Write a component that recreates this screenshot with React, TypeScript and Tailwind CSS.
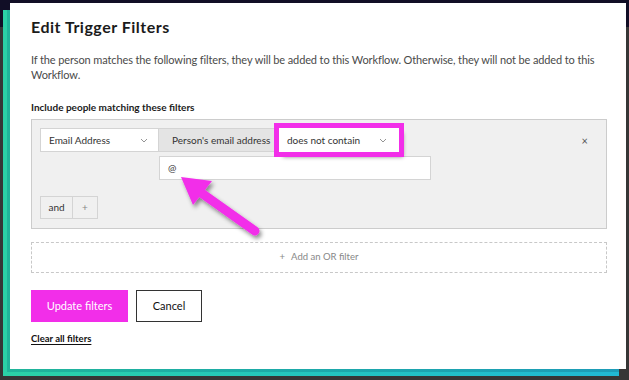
import React from "react";

export default function App() {
  const font = { fontFamily: "Lato, 'Noto Sans', Arial, sans-serif" };
  return (
    <div className="relative w-[629px] h-[380px] overflow-hidden bg-[#363636]" style={font}>
      <div className="absolute left-0 top-0 w-[629px] h-[27px] bg-[#110e26]" />
      {/* teal backdrop card */}
      <div className="absolute left-[3px] top-[10px] w-[616px] h-[366px] bg-gradient-to-r from-[#2bd1a6] to-[#21b8d4]" />
      <div className="absolute left-[7px] top-[10px] w-[612px] h-[362px] bg-gradient-to-r from-[#20b59a] to-[#1d9cb8]" />
      {/* modal */}
      <div className="absolute left-[10px] top-[3px] w-[616px] h-[366px] bg-white pl-[21px] pr-[17px]">
        <h1 className="mt-[14px] text-[16px] leading-[20px] font-bold text-[#1b1b1b] tracking-[0.5px]">Edit Trigger Filters</h1>
        <p className="mt-[15px] text-[11px] leading-[15px] text-[#4a4a4a] tracking-[-0.12px]">
          If the person matches the following filters, they will be added to this Workflow. Otherwise, they will not be added to this Workflow.
        </p>
        <div className="mt-[19px] text-[10px] leading-[12px] font-bold text-[#1b1b1b]">Include people matching these filters</div>
        <div className="mt-[6px] mr-[2px] h-[110px] border border-[#cccccc] bg-[#f0f0f0] pl-[8px] pt-[8px] relative">
          <div className="flex items-center h-[24px]">
            <div className="w-[119px] h-[24px] bg-white border border-[#d4d4d4] flex items-center justify-between pl-[8px] pr-[10px] text-[10px] text-[#333]">
              <span>Email Address</span>
              <svg width="8" height="5" viewBox="0 0 8 5"><path d="M1 1l3 3 3-3" fill="none" stroke="#888" strokeWidth="0.9" /></svg>
            </div>
            <div className="w-[120px] h-[24px] bg-[#e4e4e4] border-y border-[#d4d4d4] flex items-center pl-[13px] text-[10px] text-[#333]">
              Person's email address
            </div>
            <div className="w-[120px] h-[24px] bg-white flex items-center justify-between pl-[8px] pr-[12px] text-[10px] text-[#333] outline-[5px] outline-solid outline-[#f22ee9] shadow-[4px_5px_4px_rgba(0,0,0,0.45)] relative">
              <span>does not contain</span>
              <svg width="8" height="5" viewBox="0 0 8 5"><path d="M1 1l3 3 3-3" fill="none" stroke="#888" strokeWidth="0.9" /></svg>
            </div>
            <div className="ml-auto mr-[18px] text-[11px] text-[#555] leading-none">×</div>
          </div>
          <div className="mt-[4px] ml-[119px] w-[272px] h-[24px] bg-white border border-[#d4d4d4] flex items-center pl-[8px] text-[10px] text-[#333]">@</div>
          <div className="mt-[16px] flex w-[58px] h-[23px] border border-[#d4d4d4] bg-[#f0f0f0] text-[10px] text-[#333]">
            <div className="w-[32px] border-r border-[#d4d4d4] flex items-center justify-center">and</div>
            <div className="flex-1 flex items-center justify-center text-[#888]">+</div>
          </div>
        </div>
        <div className="mt-[13px] mr-[2px] h-[31px] border border-dashed border-[#c8c8c8] flex items-center justify-center text-[9.5px] text-[#888]">
          <span className="mr-[6px]">+</span>Add an OR filter
        </div>
        <div className="mt-[17px] flex gap-[8px]">
          <button className="w-[97px] h-[32px] bg-[#f22ee9] text-white text-[11px]">Update filters</button>
          <button className="w-[66px] h-[32px] border border-[#333] text-[#111] text-[11px]">Cancel</button>
        </div>
        <div className="mt-[10px] text-[9.5px] font-bold text-[#111] underline underline-offset-2">Clear all filters</div>
      </div>
      {/* arrow */}
      <svg className="absolute left-0 top-0" width="629" height="380" viewBox="0 0 629 380">
        <defs>
          <filter id="sh" x="-20%" y="-20%" width="140%" height="140%">
            <feDropShadow dx="2" dy="3" stdDeviation="2" floodColor="#000" floodOpacity="0.45" />
          </filter>
        </defs>
        <g filter="url(#sh)">
          <line x1="255" y1="231" x2="200" y2="192" stroke="#f22ee9" strokeWidth="9" strokeLinecap="round" />
          <polygon points="181,177 212,181 193,205" fill="#f22ee9" />
        </g>
      </svg>
    </div>
  );
}
